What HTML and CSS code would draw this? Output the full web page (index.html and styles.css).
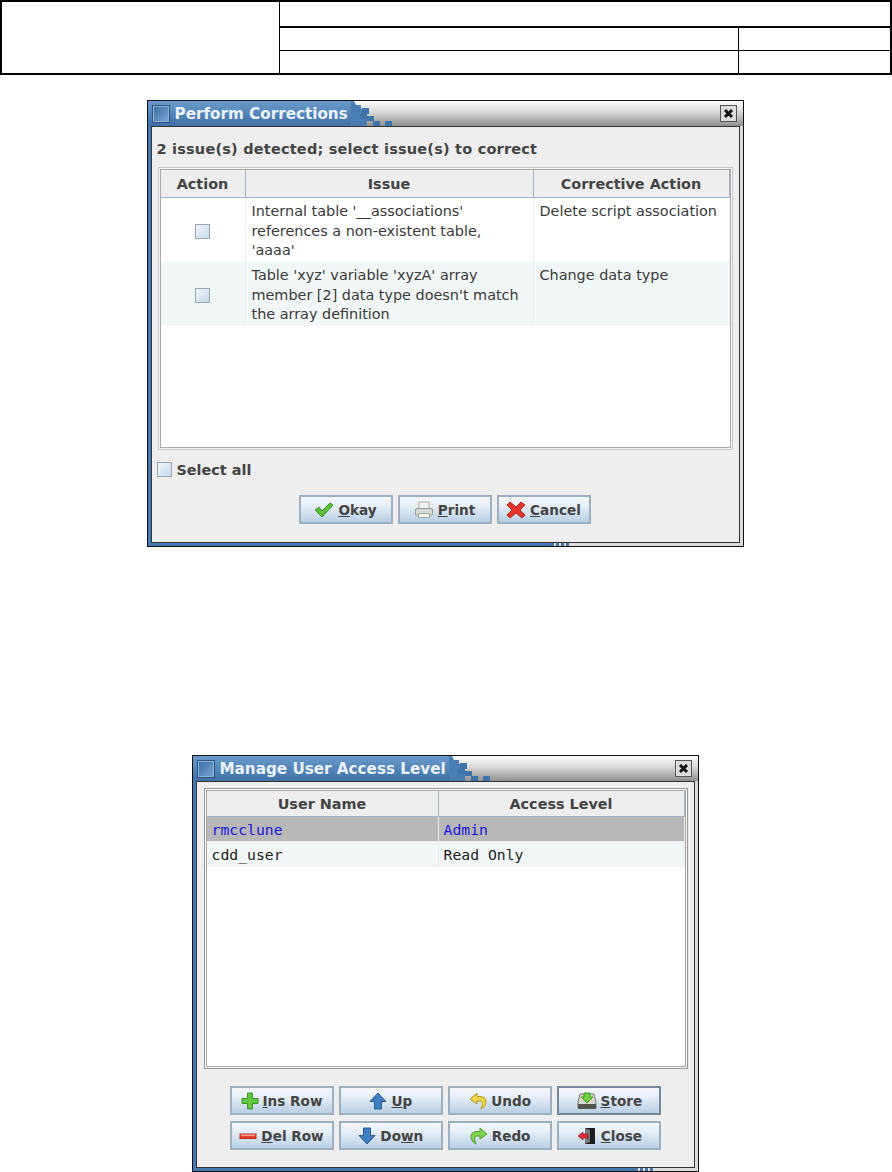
FILE: index.html
```html
<!DOCTYPE html>
<html>
<head>
	<meta charset="utf-8">
	<title>Perform Corrections</title>
	<link rel="stylesheet" href="styles.css">
</head>
<body>
	<div class="doc-header">
		<div class="hd-logo"></div>
		<div class="hd-title"></div>
		<div class="hd-cell hd-name"></div>
		<div class="hd-cell hd-rev"></div>
		<div class="hd-cell hd-date"></div>
		<div class="hd-cell hd-page"></div>
	</div>

	<div class="dialog corrections">
		<div class="titlebar">
			<span class="win-icon"></span>
			<span class="win-title">Perform Corrections</span>
			<svg class="dither" width="50" height="25" viewBox="0 0 50 25">
				<path d="M0 0H3L5 4H10V8H12V14H16V25H0Z" fill="#4a7db2"/>
				<g fill="#3f74a8">
					<rect x="11" y="7" width="7" height="6"/><rect x="9" y="13" width="7" height="5"/>
					<rect x="16" y="15" width="7" height="5"/><rect x="22" y="20" width="7" height="5"/>
					<rect x="34" y="20" width="7" height="5"/>
				</g>
			</svg>
			<span class="win-close"><svg width="11" height="11" viewBox="0 0 11 11"><path d="M2 2L9 9M9 2L2 9" stroke="#111" stroke-width="3"/></svg></span>
		</div>
		<div class="win-body">
			<div class="status">2 issue(s) detected; select issue(s) to correct</div>
			<div class="pane">
				<table class="grid issues">
					<thead>
						<tr><th class="c-action">Action</th><th class="c-issue">Issue</th><th>Corrective Action</th></tr>
					</thead>
					<tbody>
						<tr>
							<td class="check-cell"><span class="check"></span></td>
							<td>Internal table '__associations' references a non-existent table, 'aaaa'</td>
							<td>Delete script association</td>
						</tr>
						<tr class="alt">
							<td class="check-cell"><span class="check"></span></td>
							<td>Table 'xyz' variable 'xyzA' array member [2] data type doesn't match the array definition</td>
							<td>Change data type</td>
						</tr>
					</tbody>
				</table>
			</div>
			<label class="select-all"><span class="check"></span>Select all</label>
			<div class="btn-row">
				<button class="btn">
					<svg width="20" height="18" viewBox="0 0 20 18"><path d="M1 9L5 6L8 10L16 2L19 4L8 16Z" fill="#5cbf3a" stroke="#3e8e2a"/></svg>
					<span><u>O</u>kay</span>
				</button>
				<button class="btn">
					<svg width="20" height="18" viewBox="0 0 20 18"><rect x="5" y="1" width="10" height="7" fill="#f4f4f2" stroke="#a8a8a4"/><rect x="1.5" y="7.500" width="17" height="7" rx="1.500" fill="#d6d6d2" stroke="#9c9c98"/><rect x="4.500" y="12.500" width="11" height="4" fill="#f2f2f0" stroke="#a8a8a4"/></svg>
					<span><u>P</u>rint</span>
				</button>
				<button class="btn">
					<svg width="20" height="18" viewBox="0 0 20 18"><path d="M1 4L4 1L10 6L15 1L19 4L14 9L19 14L16 17L10 12L4 17L1 14L6 9Z" fill="#e8322c" stroke="#b3241f"/></svg>
					<span><u>C</u>ancel</span>
				</button>
			</div>
		</div>
		<div class="win-foot"><span class="foot-dither"></span></div>
	</div>

	<div class="dialog access">
		<div class="titlebar">
			<span class="win-icon"></span>
			<span class="win-title">Manage User Access Level</span>
			<svg class="dither" width="50" height="25" viewBox="0 0 50 25">
				<path d="M0 0H3L5 4H10V8H12V14H16V25H0Z" fill="#4a7db2"/>
				<g fill="#3f74a8">
					<rect x="11" y="7" width="7" height="6"/><rect x="9" y="13" width="7" height="5"/>
					<rect x="16" y="15" width="7" height="5"/><rect x="22" y="20" width="7" height="5"/>
					<rect x="34" y="20" width="7" height="5"/>
				</g>
			</svg>
			<span class="win-close"><svg width="11" height="11" viewBox="0 0 11 11"><path d="M2 2L9 9M9 2L2 9" stroke="#111" stroke-width="3"/></svg></span>
		</div>
		<div class="win-body">
			<div class="pane">
				<table class="grid users">
					<thead>
						<tr><th class="c-user">User Name</th><th>Access Level</th></tr>
					</thead>
					<tbody>
						<tr class="selected"><td>rmcclune</td><td>Admin</td></tr>
						<tr class="alt"><td>cdd_user</td><td>Read Only</td></tr>
					</tbody>
				</table>
			</div>
			<div class="btn-grid">
				<button class="btn">
					<svg width="18" height="18" viewBox="0 0 18 18"><path d="M6.500 1H11.500V6.500H17V11.500H11.500V17H6.500V11.500H1V6.500H6.500Z" fill="#62c640" stroke="#3b9426"/></svg>
					<span><u>I</u>ns Row</span>
				</button>
				<button class="btn">
					<svg width="18" height="18" viewBox="0 0 18 18"><path d="M9 1L17 9.500H12.500V17H5.500V9.500H1Z" fill="#3f7fbf" stroke="#2a5c90"/></svg>
					<span><u>U</u>p</span>
				</button>
				<button class="btn">
					<svg width="18" height="18" viewBox="0 0 18 18"><path d="M8 1L1 7L8 12V9H11C13 9 14 10.500 13 14L12 17C16 15 17 12 17 9.500C17 6 14 4.500 11 4.500H8Z" fill="#f0d54a" stroke="#b09a24"/></svg>
					<span>Undo</span>
				</button>
				<button class="btn btn-focus">
					<svg width="20" height="18" viewBox="0 0 20 18"><path d="M1 10L3 2H17L19 10V16H1Z" fill="#d8d8d0" stroke="#77776f"/><rect x="1" y="12" width="18" height="5" fill="#55554f"/><path d="M7 1H13V5H16L10 11L4 5H7Z" fill="#6fd040" stroke="#3f9a28"/></svg>
					<span><u>S</u>tore</span>
				</button>
				<button class="btn">
					<svg width="18" height="18" viewBox="0 0 18 18"><rect x="1" y="7" width="16" height="4.500" fill="#e8402e" stroke="#b32a1e"/><rect x="2" y="7.500" width="14" height="1.500" fill="#ffa08c"/></svg>
					<span><u>D</u>el Row</span>
				</button>
				<button class="btn">
					<svg width="18" height="18" viewBox="0 0 18 18"><path d="M9 17L17 8.500H12.500V1H5.500V8.500H1Z" fill="#3f7fbf" stroke="#2a5c90"/></svg>
					<span>Do<u>w</u>n</span>
				</button>
				<button class="btn">
					<svg width="18" height="18" viewBox="0 0 18 18"><path d="M10 1L17 7L10 12V9H7C5 9 4 10.500 5 14L6 17C2 15 1 12 1 9.500C1 6 4 4.500 7 4.500H10Z" fill="#7fd24e" stroke="#4f9c2c"/></svg>
					<span>Redo</span>
				</button>
				<button class="btn">
					<svg width="20" height="18" viewBox="0 0 20 18"><path d="M8 1H18V17H8Z" fill="#1e1e1e"/><path d="M8 1L13 3V15L8 17Z" fill="#777"/><path d="M1 9L6 5V7H11V11H6V13Z" fill="#e02c36" stroke="#9c1c24" stroke-width=".7"/></svg>
					<span><u>C</u>lose</span>
				</button>
			</div>
		</div>
		<div class="win-foot"><span class="foot-dither"></span></div>
	</div>
</body>
</html>
```

FILE: styles.css
```css
html, body {
	margin: 0;
	padding: 0;
	background: #fff;
}

body {
	display: flex;
	flex-direction: column;
	align-items: center;
	height: 1172px;
	overflow: hidden;
	font-family: "DejaVu Sans", sans-serif;
	font-size: 14.4px;
	color: #444;
}

/* document header */
.doc-header {
	align-self: stretch;
	box-sizing: border-box;
	height: 75px;
	border: 2px solid #000;
	display: grid;
	grid-template-columns: 278px 1fr 151px;
	grid-template-rows: 26px 23px 1fr;
}

.hd-logo {
	grid-row: 1 / 4;
	border-right: 1px solid #000;
}

.hd-title {
	grid-column: 2 / 4;
	border-bottom: 2px solid #000;
}

.hd-name, .hd-date {
	border-right: 1px solid #000;
}

.hd-name, .hd-rev {
	border-bottom: 1px solid #000;
}

/* dialog frame */
.dialog {
	box-sizing: border-box;
	border: 1px solid #111;
	display: flex;
	flex-direction: column;
	margin-right: 2px;
}

.corrections {
	width: 597px;
	height: 447px;
	margin-top: 25px;
	background: linear-gradient(90deg, #4478ae 403px, #dcdcdc 403px);
}

.access {
	width: 507px;
	height: 417px;
	margin-top: 208px;
	background: linear-gradient(90deg, #4478ae 442px, #dcdcdc 442px);
}

.titlebar {
	height: 25px;
	flex: none;
	display: flex;
	align-items: center;
	background: linear-gradient(#fafafa, #d8d8d8 45%, #8f8f8f);
	position: relative;
}

.win-icon {
	box-sizing: border-box;
	width: 18px;
	height: 18px;
	margin: 0 5px 0 4px;
	border: 1px solid #2d5580;
	background: linear-gradient(135deg, #3a6ea5, #7aa6d4);
	box-shadow: inset 0 0 0 1px #8cb2da;
	position: relative;
	z-index: 1;
}

.win-title {
	font-weight: bold;
	font-size: 15.2px;
	color: #eaf2fb;
	height: 25px;
	line-height: 26px;
	padding-right: 3px;
	position: relative;
	z-index: 1;
}

.titlebar::before {
	content: "";
	position: absolute;
	left: 0;
	top: 0;
	bottom: 0;
	width: 204px;
	background: linear-gradient(#6b9bcb, #3f70a6);
}

.access .titlebar::before {
	width: 258px;
}

.dither {
	flex: none;
	position: relative;
	z-index: 1;
}

.win-close {
	margin-left: auto;
	margin-right: 6px;
	box-sizing: border-box;
	width: 17px;
	height: 17px;
	border: 1px solid #555;
	background: #ddd;
	display: flex;
	align-items: center;
	justify-content: center;
}

.win-body {
	flex: 1;
	margin: 0 3px;
	border: 1px solid #333;
	background: #eee;
	display: flex;
	flex-direction: column;
	min-height: 0;
}

.win-foot {
	height: 3px;
	flex: none;
	position: relative;
}

.foot-dither {
	position: absolute;
	top: 0;
	bottom: 0;
	width: 18px;
	background: repeating-linear-gradient(90deg, #4478ae 0 3px, #dcdcdc 3px 5px);
}

.corrections .foot-dither {
	left: 403px;
}

.access .foot-dither {
	left: 442px;
}

.status {
	font-weight: bold;
	margin: 14px 0 9px 5px;
	line-height: 17px;
	font-size: 14.5px;
	letter-spacing: .2px;
}

.pane {
	box-sizing: border-box;
	border: 1px solid #c6c6c6;
	box-shadow: inset 0 0 0 1px #f6f6f6, inset 0 0 0 2px #a9a9a9;
	padding: 2px;
	background: #fff;
}

.corrections .pane {
	width: 575px;
	height: 283px;
	margin-left: 6px;
}

.access .pane {
	width: 484px;
	height: 281px;
	margin: 6px 0 0 7px;
	border-color: #999;
}

.grid {
	width: 100%;
	border-collapse: separate;
	border-spacing: 0;
	table-layout: fixed;
}

.grid th {
	box-sizing: border-box;
	padding: 0;
	font-size: 14.4px;
	background: #eee;
	color: #444;
	border-right: 1px solid #9fb4c8;
	border-bottom: 1px solid #9fb4c8;
	text-align: center;
}

.issues th {
	height: 28px;
}

.grid td {
	padding: 4px 6px;
	vertical-align: top;
	color: #3a3a3a;
	border-right: 1px solid #eee;
}

.issues td {
	height: 64px;
	box-sizing: border-box;
	padding-top: 4px;
	padding-bottom: 1px;
	line-height: 19.5px;
}

.c-action { width: 85px; }
.c-issue { width: 288px; }
.c-user { width: 232px; }

.check-cell {
	text-align: center;
	vertical-align: middle !important;
}

.check {
	display: inline-block;
	box-sizing: border-box;
	width: 15px;
	height: 15px;
	border: 1px solid #9aa8b4;
	background: linear-gradient(135deg, #f2f6fa, #c6d8ea);
	vertical-align: middle;
}

.alt td {
	background: #f1f7f6;
}

.users td {
	height: 25px;
	box-sizing: border-box;
	padding: 0 5px;
	vertical-align: middle;
	font-family: "DejaVu Sans Mono", monospace;
	font-size: 14.75px;
	color: #222;
	border-bottom: 1px solid #eef2f2;
}

.users th {
	height: 26px;
}

.selected td {
	background: #b8b8b8;
	color: #1616e0;
}

.select-all {
	display: flex;
	align-items: center;
	gap: 5px;
	font-weight: bold;
	margin: 11px 0 0 5px;
	height: 17px;
}

.btn-row {
	display: flex;
	gap: 5px;
	margin: 17px 0 0 147px;
}

.btn-grid {
	display: grid;
	grid-template-columns: repeat(4, 104px);
	grid-auto-rows: 29px;
	gap: 6px 5.3px;
	margin: 17px 0 0 33px;
}

.btn {
	box-sizing: border-box;
	width: 94px;
	height: 29px;
	padding: 1px 0 0;
	border: 2px solid #9db0c2;
	background: linear-gradient(#f4f7fa, #e6eef6 35%, #b9cfe5);
	display: flex;
	align-items: center;
	justify-content: center;
	gap: 4px;
	font-family: "DejaVu Sans", sans-serif;
	font-size: 13.6px;
	font-weight: bold;
	color: #444;
}

.btn-grid .btn {
	width: 104px;
}

.btn-focus {
	border-color: #75879a;
}

.btn svg {
	flex: none;
}
```
